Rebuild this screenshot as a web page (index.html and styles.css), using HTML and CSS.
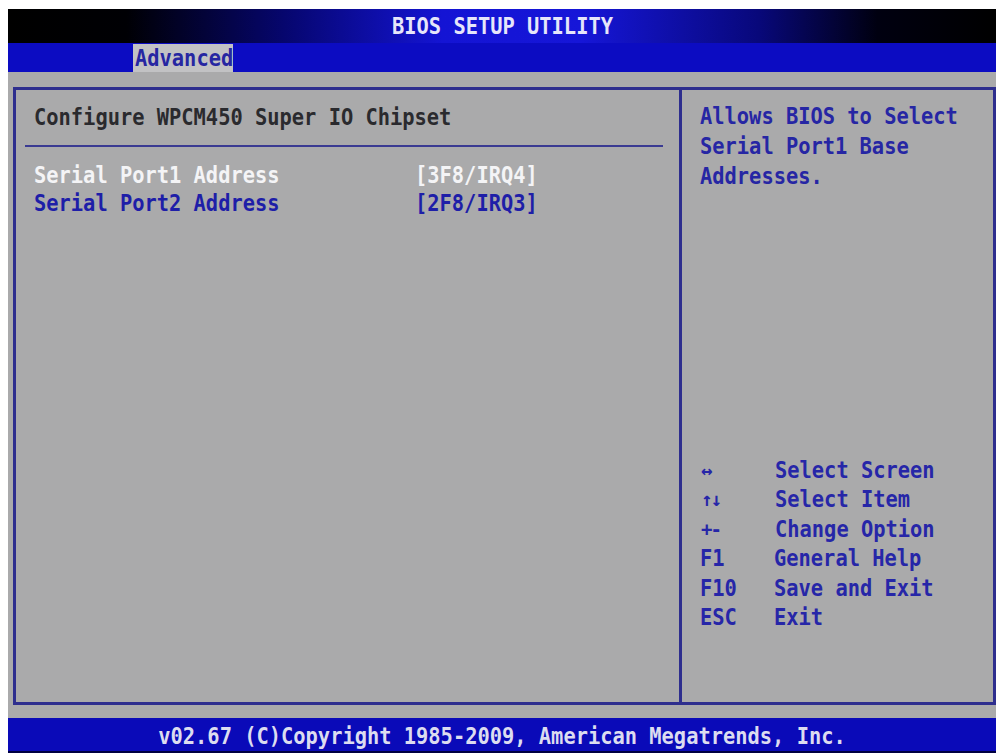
FILE: index.html
```html
<!DOCTYPE html>
<html>
<head>
<meta charset="utf-8">
<title>BIOS Setup Utility</title>
<link rel="stylesheet" href="styles.css">
</head>
<body>
<div class="screen">
  <div class="titlebar"><span class="t">BIOS SETUP UTILITY</span></div>
  <div class="menubar"><div class="tab"><span class="t">Advanced</span></div></div>
  <div class="main">
    <div class="panel">
      <div class="left">
        <div class="heading t">Configure WPCM450 Super IO Chipset</div>
        <div class="rule"></div>
        <div class="row selected"><span class="label t">Serial Port1 Address</span><span class="value t">[3F8/IRQ4]</span></div>
        <div class="row"><span class="label t">Serial Port2 Address</span><span class="value t">[2F8/IRQ3]</span></div>
      </div>
      <div class="right">
        <div class="help">
          <div class="t">Allows BIOS to Select</div>
          <div class="t">Serial Port1 Base</div>
          <div class="t">Addresses.</div>
        </div>
        <div class="keys">
          <div class="key"><span class="k arrows">&#8596;</span><span class="d t">Select Screen</span></div>
          <div class="key"><span class="k arrows">&#8593;&#8595;</span><span class="d t">Select Item</span></div>
          <div class="key"><span class="k arrows">+-</span><span class="d t">Change Option</span></div>
          <div class="key"><span class="k t">F1</span><span class="d t">General Help</span></div>
          <div class="key"><span class="k t">F10</span><span class="d t">Save and Exit</span></div>
          <div class="key"><span class="k t">ESC</span><span class="d t">Exit</span></div>
        </div>
      </div>
    </div>
  </div>
  <div class="footer"><span class="t">v02.67 (C)Copyright 1985-2009, American Megatrends, Inc.</span></div>
</div>
</body>
</html>
```
FILE: styles.css
```css
html, body {
  margin: 0;
  padding: 0;
  background: #ffffff;
}

body {
  font-family: "DejaVu Sans Mono", "Liberation Mono", monospace;
  font-weight: bold;
  font-size: 20.4px;
}

.screen {
  margin: 9px 0 0 8px;
  width: 988px;
  height: 744px;
  display: flex;
  flex-direction: column;
  background: #aaaaab;
}

.t {
  display: inline-block;
  transform: scaleY(1.15);
  transform-origin: 50% 55%;
  white-space: pre;
}

.titlebar {
  height: 34px;
  flex: none;
  display: flex;
  align-items: center;
  justify-content: center;
  background: linear-gradient(to right, #000000 0%, #000004 12%, #06066e 28%, #1414d4 44%, #1616d8 58%, #08087a 76%, #000010 88%, #000000 100%);
  color: #e6e6fa;
  padding-left: 1px;
}

.menubar {
  height: 29px;
  flex: none;
  background: #0c0cc2;
  display: flex;
  align-items: stretch;
  padding-left: 125px;
}

.tab {
  width: 100px;
  margin-top: 1px;
  background: #c2c2c4;
  color: #2626a2;
  line-height: 28px;
  padding-left: 2px;
  box-sizing: border-box;
}

.main {
  flex: 1;
  padding: 15px 0 13px 5px;
  display: flex;
}

.panel {
  flex: 1;
  border: 3px solid #2e2e8e;
  display: flex;
}

.left {
  width: 666px;
  flex: none;
  border-right: 3px solid #2e2e8e;
  padding-top: 13px;
  box-sizing: border-box;
}

.heading {
  line-height: 28px;
  padding-left: 18px;
  color: #2a2a2e;
}

.rule {
  height: 2px;
  margin: 14px 16px 14px 9px;
  background: #3a3a92;
}

.row {
  display: flex;
  line-height: 28px;
  padding-left: 18px;
  color: #1e1ea8;
}

.row.selected {
  color: #f4f4f6;
}

.row .label {
  width: 381px;
}

.right {
  flex: 1;
  display: flex;
  flex-direction: column;
  padding: 11px 0 70px 18px;
}

.help {
  line-height: 30px;
  color: #2626a4;
}

.help .t {
  display: block;
}

.keys {
  margin-top: auto;
  color: #2626a8;
}

.key {
  display: flex;
  align-items: center;
  height: 29.5px;
}

.key .k {
  width: 74px;
  flex: none;
}

.key .arrows {
  font-size: 19px;
  padding-left: 1px;
  letter-spacing: -2px;
}

.footer {
  height: 35px;
  flex: none;
  background: #0a0ab8;
  color: #dcdcf0;
  display: flex;
  align-items: center;
  justify-content: center;
  box-shadow: inset 0 -2px 0 #000040;
}
```
